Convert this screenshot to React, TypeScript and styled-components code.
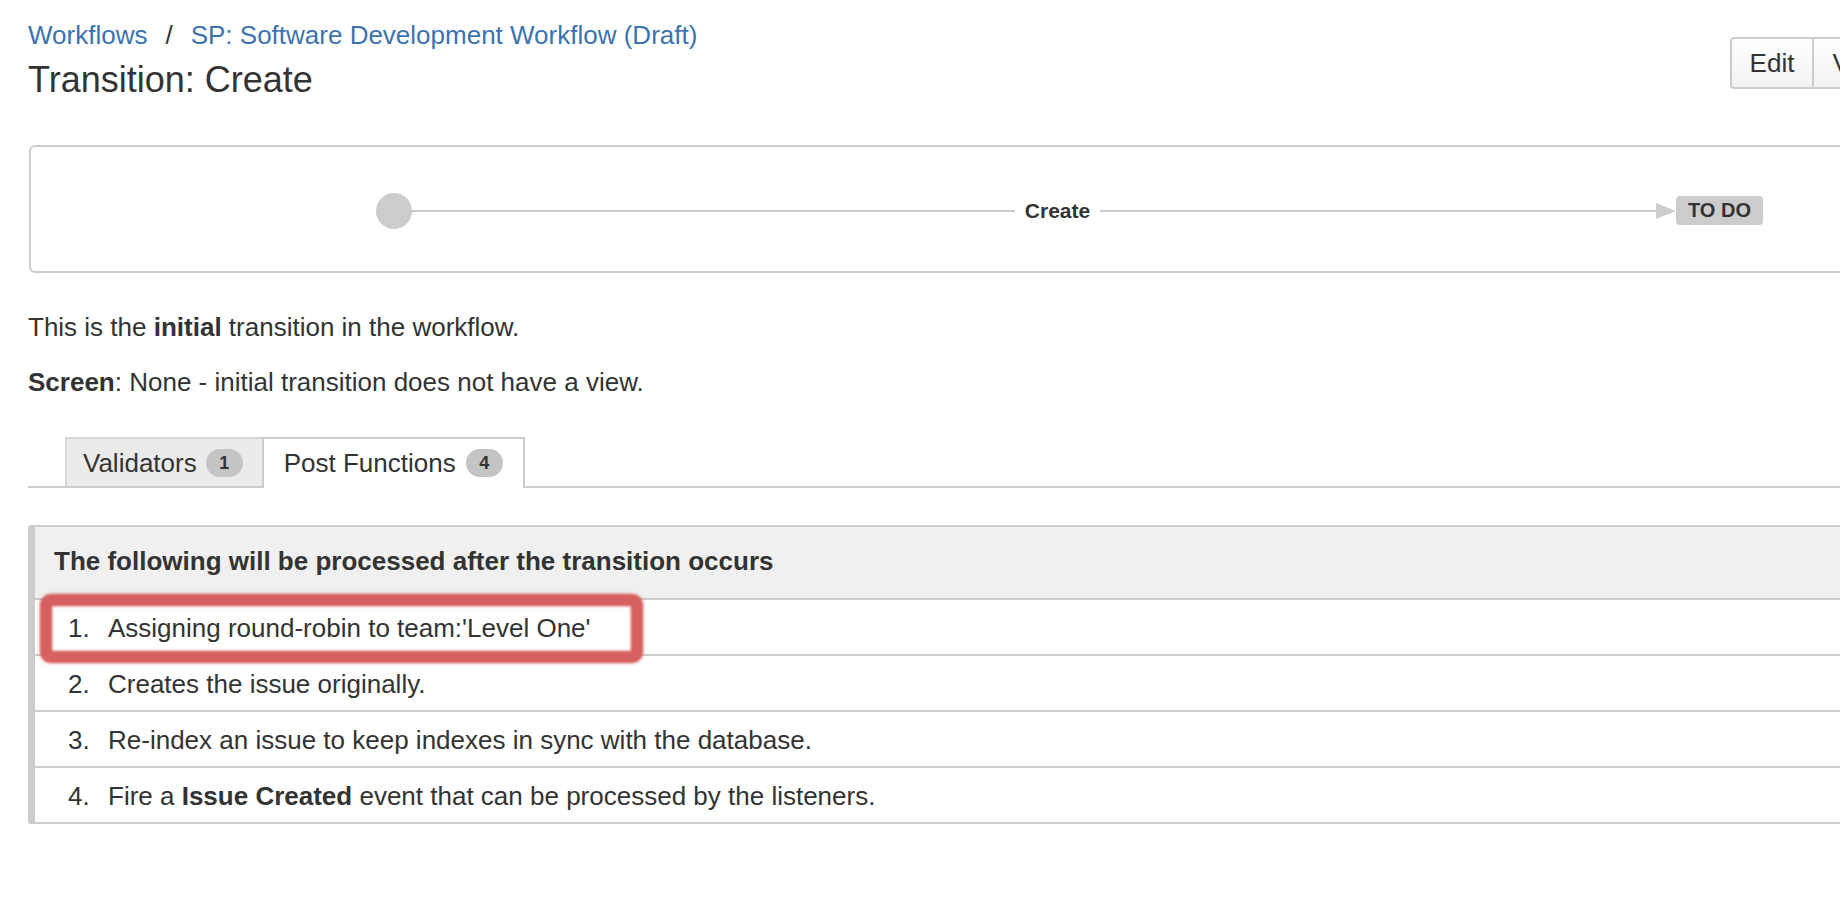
import React from 'react';
import styled, { createGlobalStyle } from 'styled-components';

const GlobalStyle = createGlobalStyle`
  html, body {
    margin: 0;
    padding: 0;
    background: #fff;
    overflow: hidden;
  }
  body {
    font-family: "Liberation Sans", Arial, Helvetica, sans-serif;
    color: #333;
  }
  *, *::before, *::after { box-sizing: border-box; }
`;

const Page = styled.main`
  width: 2034px;
  padding: 20px 0 0 28px;
`;

const Header = styled.header`
  display: flex;
  align-items: flex-start;
  justify-content: space-between;
`;

const TitleBlock = styled.div`
  display: flex;
  flex-direction: column;
`;

const Breadcrumbs = styled.nav`
  display: flex;
  font-size: 26px;
  line-height: 30px;
`;

const Crumb = styled.a`
  color: #3b73af;
  text-decoration: none;
`;

const Separator = styled.span`
  margin: 0 18px;
  color: #333;
`;

const Title = styled.h1`
  margin: 10px 0 0;
  font-size: 36px;
  line-height: 40px;
  font-weight: normal;
  color: #333;
`;

const ButtonGroup = styled.div`
  display: flex;
  margin-top: 17px;
`;

const Button = styled.button<{ $first?: boolean }>`
  height: 52px;
  padding: 0 18px;
  font-family: inherit;
  font-size: 26px;
  color: #333;
  background: linear-gradient(#ffffff, #f2f2f2);
  border: 2px solid #ccc;
  border-radius: ${(p) => (p.$first ? '4px 0 0 4px' : '0 4px 4px 0')};
  margin-left: ${(p) => (p.$first ? '0' : '-2px')};
  white-space: nowrap;
`;

const Panel = styled.section`
  margin: 45px 0 0 1px;
  height: 128px;
  border: 2px solid #ccc;
  border-radius: 6px;
  display: flex;
  align-items: center;
  padding: 3px 0 0 345px;
`;

const Diagram = styled.div`
  display: flex;
  align-items: center;
`;

const StartNode = styled.div`
  width: 36px;
  height: 36px;
  border-radius: 50%;
  background: #ccc;
`;

const Connector = styled.div<{ $w: number }>`
  width: ${(p) => p.$w}px;
  height: 2px;
  background: #ccc;
`;

const TransitionLabel = styled.span`
  width: 85px;
  text-align: center;
  font-size: 21px;
  font-weight: bold;
  color: #333;
`;

const ArrowHead = styled.div`
  width: 0;
  height: 0;
  border-top: 8px solid transparent;
  border-bottom: 8px solid transparent;
  border-left: 20px solid #ccc;
`;

const StatusLozenge = styled.span`
  height: 29px;
  padding: 0 12px;
  line-height: 29px;
  font-size: 20px;
  font-weight: bold;
  text-transform: uppercase;
  background: #ccc;
  color: #333;
  border-radius: 4px;
`;

const Description = styled.div`
  margin-top: 36px;
  display: flex;
  flex-direction: column;
  gap: 19px;
`;

const Para = styled.p`
  margin: 0;
  font-size: 26px;
  line-height: 36px;
`;

const TabBar = styled.div`
  margin-top: 37px;
  display: flex;
  align-items: flex-end;
  padding-left: 37px;
  border-bottom: 2px solid #ccc;
`;

const Tab = styled.div<{ $active?: boolean }>`
  display: flex;
  align-items: center;
  gap: ${(p) => (p.$active ? '10px' : '9px')};
  height: ${(p) => (p.$active ? '51px' : '49px')};
  margin-bottom: ${(p) => (p.$active ? '-2px' : '0')};
  padding: ${(p) => (p.$active ? '0 20px 2px 20px' : '0 19px 0 16px')};
  font-size: 26px;
  line-height: 30px;
  color: #333;
  background: ${(p) => (p.$active ? '#fff' : '#ebebeb')};
  border: 2px solid ${(p) => (p.$active ? '#ccc' : '#d6d6d6')};
  border-bottom: none;
  ${(p) => (p.$active ? '' : 'border-right: none;')}
`;

const Badge = styled.span`
  display: inline-flex;
  align-items: center;
  justify-content: center;
  width: 37px;
  height: 28px;
  border-radius: 14px;
  background: #c4c4c4;
  color: #333;
  font-size: 18px;
  font-weight: bold;
`;

const Table = styled.section`
  margin-top: 37px;
  border-left: 7px solid #ccc;
  border-top: 2px solid #ccc;
  border-top-left-radius: 3px;
  border-bottom-left-radius: 3px;
`;

const TableHeader = styled.div`
  height: 73px;
  padding: 19px 0 0 19px;
  background: #f0f0f0;
  border-bottom: 2px solid #ccc;
  font-size: 26px;
  line-height: 30px;
  font-weight: bold;
  color: #333;
`;

const FunctionList = styled.ol`
  margin: 0;
  padding: 0;
  list-style: none;
`;

const FunctionRow = styled.li`
  position: relative;
  display: flex;
  height: 56px;
  padding: 13px 0 0 33px;
  border-bottom: 2px solid #ccc;
  font-size: 26px;
  line-height: 30px;
  color: #333;
`;

const Num = styled.span`
  width: 40px;
  flex: none;
`;

const Highlight = styled.span`
  position: absolute;
  left: 5px;
  top: -6px;
  width: 603px;
  height: 69px;
  border: 12px solid #d65f5f;
  border-radius: 11px;
  box-shadow: 0 0 3px rgba(214, 95, 95, 0.6), inset 0 0 3px rgba(214, 95, 95, 0.6);
  filter: blur(0.8px);
  pointer-events: none;
`;

const functions: { text: React.ReactNode; highlighted?: boolean }[] = [
  { text: "Assigning round-robin to team:'Level One'", highlighted: true },
  { text: 'Creates the issue originally.' },
  { text: 'Re-index an issue to keep indexes in sync with the database.' },
  {
    text: (
      <>
        Fire a <b>Issue Created</b> event that can be processed by the listeners.
      </>
    ),
  },
];

export default function App() {
  return (
    <>
      <GlobalStyle />
      <Page>
        <Header>
          <TitleBlock>
            <Breadcrumbs>
              <Crumb href="#">Workflows</Crumb>
              <Separator>/</Separator>
              <Crumb href="#">SP: Software Development Workflow (Draft)</Crumb>
            </Breadcrumbs>
            <Title>Transition: Create</Title>
          </TitleBlock>
          <ButtonGroup>
            <Button $first>Edit</Button>
            <Button>View Properties</Button>
          </ButtonGroup>
        </Header>

        <Panel>
          <Diagram>
            <StartNode />
            <Connector $w={603} />
            <TransitionLabel>Create</TransitionLabel>
            <Connector $w={556} />
            <ArrowHead />
            <StatusLozenge>To Do</StatusLozenge>
          </Diagram>
        </Panel>

        <Description>
          <Para>
            This is the <b>initial</b> transition in the workflow.
          </Para>
          <Para>
            <b>Screen</b>: None - initial transition does not have a view.
          </Para>
        </Description>

        <TabBar>
          <Tab>
            Validators <Badge>1</Badge>
          </Tab>
          <Tab $active>
            Post Functions <Badge>4</Badge>
          </Tab>
        </TabBar>

        <Table>
          <TableHeader>The following will be processed after the transition occurs</TableHeader>
          <FunctionList>
            {functions.map((f, i) => (
              <FunctionRow key={i}>
                <Num>{i + 1}.</Num>
                <span>{f.text}</span>
                {f.highlighted && <Highlight />}
              </FunctionRow>
            ))}
          </FunctionList>
        </Table>
      </Page>
    </>
  );
}
